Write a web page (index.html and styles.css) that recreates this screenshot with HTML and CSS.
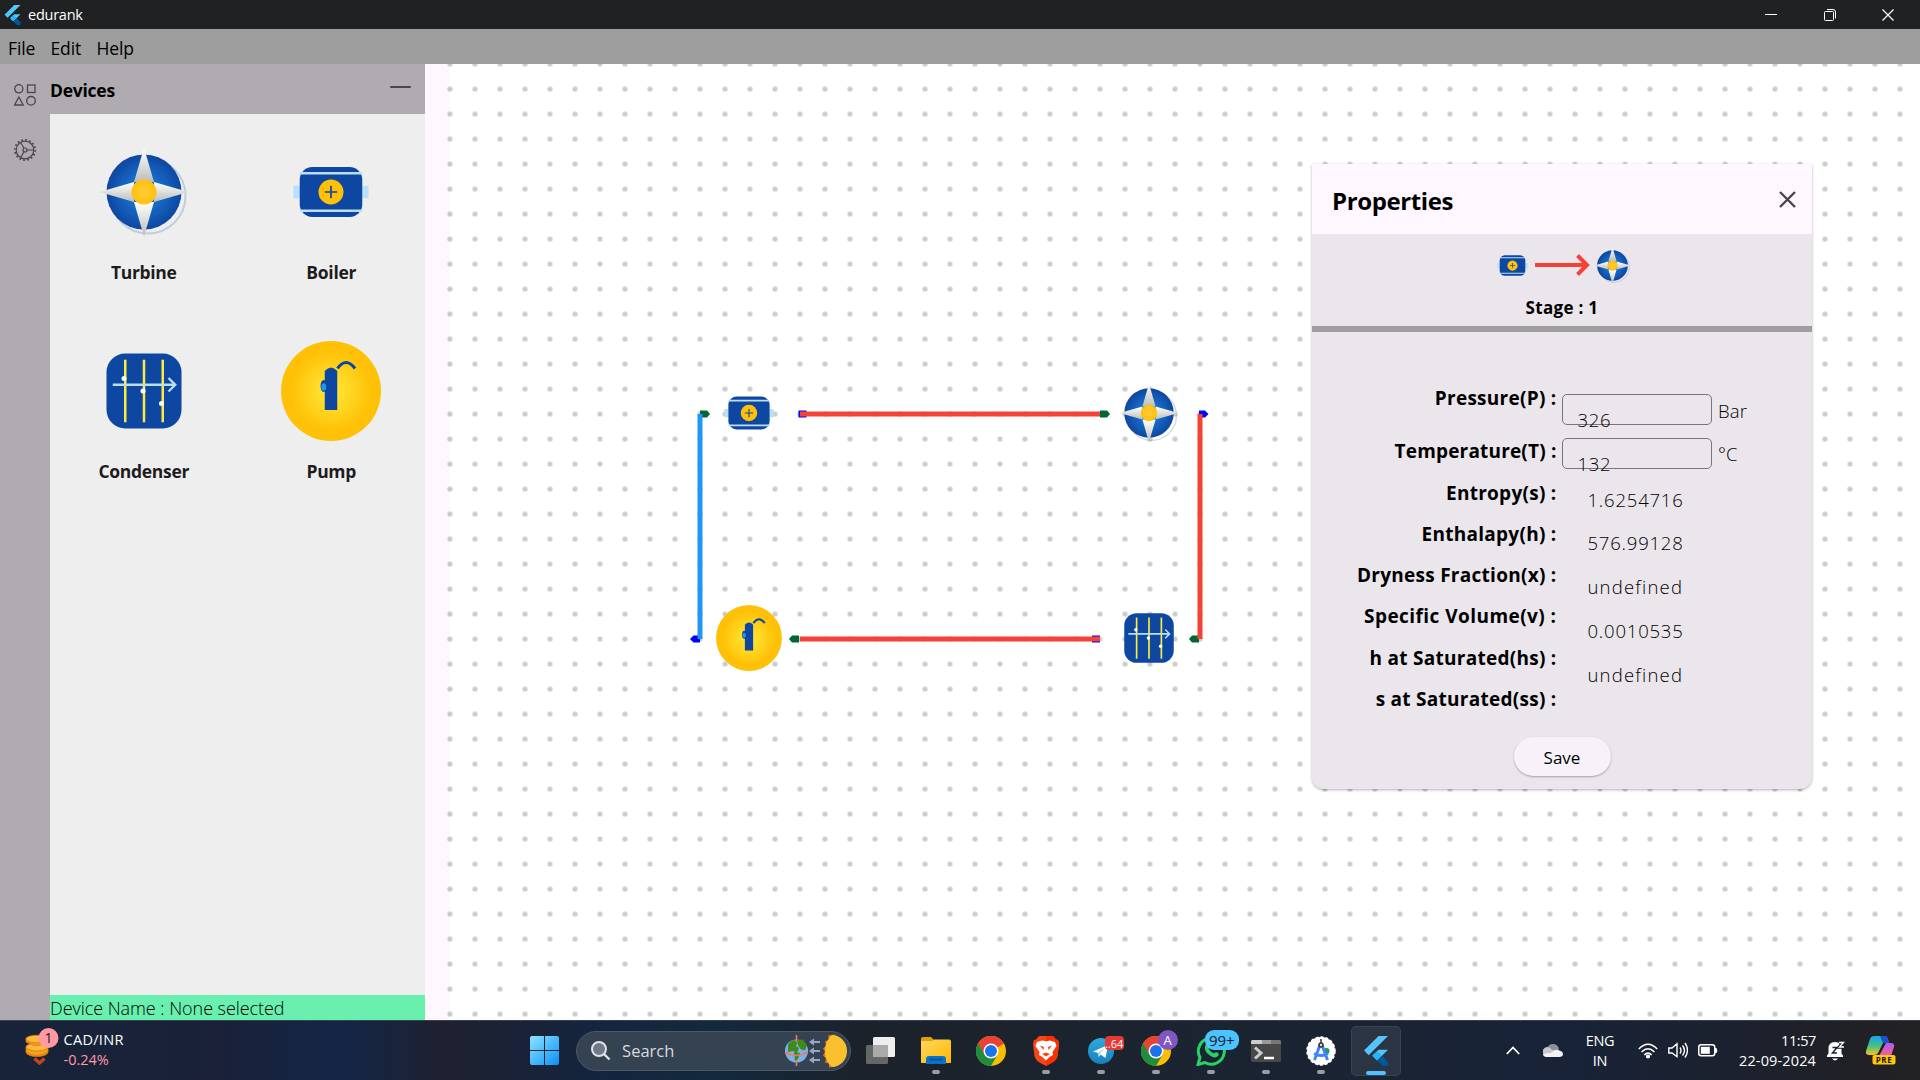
FILE: index.html
```
<!DOCTYPE html>
<html lang="en">
<head>
<meta charset="utf-8">
<title>edurank</title>
<link rel="stylesheet" href="styles.css">
</head>
<body>
<svg class="defs" aria-hidden="true">
  <defs>
    <radialGradient id="g-blue"><stop offset="0" stop-color="#1e88e5"/><stop offset="1" stop-color="#0d47a1"/></radialGradient>
    <radialGradient id="g-hub"><stop offset="0" stop-color="#ffca40"/><stop offset="1" stop-color="#ffc107"/></radialGradient>
    <radialGradient id="g-pump"><stop offset="0" stop-color="#ffeb3b"/><stop offset=".8" stop-color="#ffc107"/></radialGradient>
    <linearGradient id="g-blade" x2="0" y2="1"><stop offset="0" stop-color="#fff"/><stop offset="1" stop-color="#bdbdbd"/></linearGradient>
    <linearGradient id="g-win" x2="1" y2="1"><stop offset="0" stop-color="#8de4ff"/><stop offset="1" stop-color="#0a91f5"/></linearGradient>
    <linearGradient id="g-folder" x2="1" y2="1"><stop offset="0" stop-color="#ffd75e"/><stop offset="1" stop-color="#ffb901"/></linearGradient>
    <linearGradient id="g-tele" x2="0" y2="1"><stop offset="0" stop-color="#2fa8e0"/><stop offset="1" stop-color="#1681bd"/></linearGradient>
    <linearGradient id="g-cop" x2="0" y2="1"><stop offset="0" stop-color="#1ba4e8"/><stop offset=".5" stop-color="#3fbf8e"/><stop offset="1" stop-color="#f5c518"/></linearGradient>
    <linearGradient id="g-cop2" x2="0" y2="1"><stop offset="0" stop-color="#b45be8"/><stop offset="1" stop-color="#f2609a"/></linearGradient>
    <symbol id="turbine" viewBox="0 0 100 100">
      <circle cx="50" cy="50" r="37.500" fill="url(#g-blue)"/>
      <circle cx="54" cy="54" r="37.500" fill="none" stroke="#0d47a1" stroke-opacity=".2" stroke-width="2"/>
      <path d="M50 5.500L60 40H40z" fill="url(#g-blade)"/>
      <path d="M50 94.500L60 60H40z" fill="url(#g-blade)"/>
      <path d="M5.500 50L40 40V60z" fill="url(#g-blade)"/>
      <path d="M94.500 50L60 40V60z" fill="url(#g-blade)"/>
      <circle cx="50" cy="50" r="12.500" fill="url(#g-hub)"/>
    </symbol>
    <symbol id="boiler" viewBox="0 0 100 100">
      <path d="M12.500 43.750H19V56.250H12.500zM81 43.750h6.500V56.250H81z" fill="#bbdefb"/>
      <rect x="18.750" y="25" width="62.500" height="50" rx="12.500" fill="#0d47a1"/>
      <path d="M18.750 31.250h62.500M18.750 68.750h62.500" stroke="#bbdefb" stroke-width="2.500"/>
      <circle cx="50" cy="50" r="12.500" fill="#ffc107"/>
      <path d="M43.750 50h12.500M50 43.750v12.500" stroke="#0d47a1" stroke-width="1.700"/>
    </symbol>
    <symbol id="condenser" viewBox="0 0 100 100">
      <rect x="12.500" y="12.500" width="75" height="75" rx="18.750" fill="#0d47a1"/>
      <path d="M31.250 18.750v62.500M50 18.750v62.500M68.750 18.750v62.500" stroke="#ffeb3b" stroke-width="2.500"/>
      <path d="M18.750 43.750H81M74.500 37l6.800 6.750-6.800 6.750" fill="none" stroke="#bbdefb" stroke-width="2.300"/>
      <g fill="#fff"><circle cx="30" cy="37.500" r="2.500"/><circle cx="49" cy="50" r="2.500"/><circle cx="67.500" cy="62.500" r="2.500"/></g>
    </symbol>
    <symbol id="pump" viewBox="0 0 100 100">
      <circle cx="50" cy="50" r="50" fill="url(#g-pump)"/>
      <ellipse cx="42.700" cy="45" rx="3.200" ry="6" fill="#0d47a1"/>
      <path d="M43.750 30q6.250-7 12.500 0v39h-12.500z" fill="#0d47a1"/>
      <ellipse cx="42.700" cy="46" rx="2.500" ry="3.800" fill="#2196f3"/>
      <path d="M56.500 27.500q8.500-12 17.500 0" fill="none" stroke="#0d47a1" stroke-width="3"/>
    </symbol>
    <symbol id="flutter" viewBox="0 0 24 30">
      <path d="M14.500 0H24L4.700 19.300 0 14.600z" fill="#54c5f8"/>
      <path d="M14.500 13.700H24L13.200 24.500 8.300 19.700z" fill="#54c5f8"/>
      <path d="M8.300 19.700l4.900-4.800 4.900 4.800-4.900 4.900z" fill="#29b6f6"/>
      <path d="M13.200 24.600l4.900-4.900 5.900 6.300V30h-5.400z" fill="#01579b"/>
    </symbol>
    <symbol id="chrome" viewBox="0 0 30 30">
      <circle cx="15" cy="15" r="15" fill="#fbbc04"/>
      <path d="M15 15L2 7.500A15 15 0 0 0 15 30L21.500 18.700z" fill="#1e8e3e"/>
      <path d="M15 15L8.500 18.700 2 7.500A15 15 0 0 1 28 7.500z" fill="#ea4335"/>
      <circle cx="15" cy="15" r="7.500" fill="#fff"/><circle cx="15" cy="15" r="6" fill="#1a73e8"/>
    </symbol>
  </defs>
</svg>

<header class="titlebar">
  <svg class="app-icon" width="17" height="20"><use href="#flutter"/></svg>
  <span class="app-name">edurank</span>
  <div class="window-buttons">
    <svg width="12" height="12"><path d="M0 5.500h12" stroke="#fff"/></svg>
    <svg width="12" height="12" fill="none" stroke="#fff"><rect x=".500" y="2.500" width="9" height="9" rx="1"/><path d="M3 .500h6a2.500 2.500 0 0 1 2.500 2.500v6.500"/></svg>
    <svg width="12" height="12"><path d="M.500.500l11 11M11.500.500l-11 11" stroke="#fff" stroke-width="1.200"/></svg>
  </div>
</header>
<nav class="menubar"><span class="m-file">File</span><span class="m-edit">Edit</span><span>Help</span></nav>

<main class="workspace">
  <aside class="rail">
    <svg width="22" height="22" fill="none" stroke="#4a454d" stroke-width="1.300"><circle cx="4.800" cy="4.800" r="4.100"/><rect x="13.500" y="1" width="7.500" height="7.500"/><path d="M4.800 13L9.200 21H.600z"/><circle cx="17" cy="16.800" r="4.300"/></svg>
    <svg width="22" height="22" fill="none" stroke="#4a454d" stroke-width="1.200"><circle cx="11" cy="11" r="8.800"/><circle cx="11" cy="11" r="10.200" stroke-dasharray="1.800 2.200" stroke-width="1.600"/><circle cx="11" cy="11" r="2"/><path d="M13 11h7M10 9.300L6.500 3.300M10 12.700l-3.500 6"/></svg>
  </aside>
  <section class="devices">
    <header class="devices-head"><h2>Devices</h2><i class="collapse"></i></header>
    <div class="device-grid">
      <div class="device"><svg><use href="#turbine"/></svg><span>Turbine</span></div>
      <div class="device"><svg><use href="#boiler"/></svg><span>Boiler</span></div>
      <div class="device"><svg><use href="#condenser"/></svg><span>Condenser</span></div>
      <div class="device"><svg><use href="#pump"/></svg><span>Pump</span></div>
    </div>
    <footer class="device-status">Device Name : None selected</footer>
  </section>
  <section class="canvas">
    <svg class="grid-dots" width="1495" height="956">
      <defs><pattern id="dots" x="12.500" y="-12.500" width="25" height="25" patternUnits="userSpaceOnUse"><circle cx="12.500" cy="12.500" r="2.600" fill="#000" fill-opacity=".2"/></pattern></defs>
      <rect x="12.500" width="1482" height="956" fill="url(#dots)"/>
    </svg>
    <svg class="node n-boiler"><use href="#boiler"/></svg>
    <svg class="node n-turbine"><use href="#turbine"/></svg>
    <svg class="node n-pump"><use href="#pump"/></svg>
    <svg class="node n-condenser"><use href="#condenser"/></svg>
    <svg class="wires" viewBox="425 64 1495 956" width="1495" height="956">
      <path fill="#063" d="M700 410.500h7l3 3.500-3 3.500h-7zM1100 410.500h7l3 3.500-3 3.500h-7zM799 635.500h-7l-3 3.500 3 3.500h7zM1199 635.500h-7l-3 3.500 3 3.500h7z"/>
      <path fill="#00f" d="M798.500 410.500h8v7h-8zM1092 635.500h8v7h-8zM1199 410.500h6l3.500 3.500-3.500 3.500h-6zM700 635.500h-6.500l-3.500 3.500 3.500 3.500h6.500z"/>
      <path d="M800 414h300M1200 414v225M1100 639H800" stroke="#f44336" stroke-width="5" fill="none"/>
      <path d="M700 639V414" stroke="#2196f3" stroke-width="5"/>
    </svg>

    <section class="panel">
      <header class="panel-head">
        <h1>Properties</h1>
        <svg width="17" height="17"><path d="M1 1l15 15M16 1L1 16" stroke="#49454f" stroke-width="2.400"/></svg>
      </header>
      <div class="stage">
        <div class="stage-flow">
          <svg class="mini"><use href="#boiler"/></svg>
          <svg width="55" height="22" fill="none" stroke="#f44336" stroke-width="4"><path d="M0 11h52M42.500 1.500L52 11l-9.500 9.500"/></svg>
          <svg class="mini"><use href="#turbine"/></svg>
        </div>
        <strong>Stage : 1</strong>
      </div>
      <div class="props">
        <div class="labels">
          <b class="l-pressure">Pressure(P) :</b><b class="l-temp">Temperature(T) :</b><b>Entropy(s) :</b><b>Enthalapy(h) :</b><b>Dryness Fraction(x) :</b><b class="l-volume">Specific Volume(v) :</b><b>h at Saturated(hs) :</b><b>s at Saturated(ss) :</b>
        </div>
        <div class="values">
          <div class="field"><div class="box">326</div><em>Bar</em></div>
          <div class="field"><div class="box">132</div><em class="deg">°C</em></div>
          <div class="results"><span>1.6254716</span><span>576.99128</span><span class="word">undefined</span><span>0.0010535</span><span class="word">undefined</span></div>
        </div>
      </div>
      <button class="save">Save</button>
    </section>
  </section>
</main>

<footer class="taskbar">
  <div class="ticker">
    <svg width="34" height="38"><g fill="#f7a01d" stroke="#d97706" stroke-width=".800"><ellipse cx="12" cy="24" rx="11" ry="4.500"/><path d="M1 19v5q11 7 22 0v-5z"/><ellipse cx="12" cy="19" rx="11" ry="4" fill="#ffb93c"/><path d="M1 10v4q11 7 22 0v-4z"/><ellipse cx="12" cy="11" rx="11" ry="3.800" fill="#ffb93c"/></g><path d="M9.500 30.500l5 4.500 5-4.500" fill="none" stroke="#c8431a" stroke-width="3.500"/><circle cx="23.500" cy="10" r="10" fill="#ff99a4"/><text x="23.500" y="15" text-anchor="middle" font-size="14" fill="#1a1a1a">1</text></svg>
    <div class="ticker-text"><span class="pair">CAD/INR</span><span class="down">-0.24%</span></div>
  </div>
  <div class="apps">
    <div class="app"><svg width="30" height="30"><path d="M0 2q0-2 2-2h12v14H0zM15 0h12q2 0 2 2v12H15zM0 15h14v14H2q-2 0-2-2zM15 15h14v12q0 2-2 2H15z" fill="url(#g-win)"/></svg></div>
    <div class="search">
      <svg width="20" height="20" fill="none" stroke="#dfe3e8" stroke-width="2"><circle cx="8" cy="8" r="7" fill="#6f7a86"/><path d="M13 13l5.500 5.500" stroke-width="2.400"/></svg>
      <span>Search</span>
      <svg class="equinox" width="64" height="36"><circle cx="12.500" cy="18" r="11.500" fill="#7eb2e6"/><path d="M4 11l5-4 5 1-2 5 3 2-2 5-4-2-5 1zM13 7l6-.500 4 6-2 5-4-1-3-4zM10 19l6 1-2 6-3 2z" fill="#3f8a1c"/><path d="M1 19q11 7 23 0M12.500 2v7M12.500 27v6" stroke="#f0776a" stroke-width="1.600" fill="none"/><path d="M26 9h10M26 18h10M26 27h10" stroke="#93a8c4" stroke-width="2"/><path d="M30 5.500v7L25 9zM30 14.500v7L25 18zM30 23.500v7L25 27z" fill="#93a8c4"/><path d="M51 1.500l-7 1 1 4-4 2 1 4-3 3 2 3-2 4 3 3-1 4 4 1 0 4 6-1z" fill="#e87817"/><path d="M48 2a15 16 0 0 1 0 32q-7-6-7-16t7-16z" fill="#fbc02d"/></svg>
    </div>
    <div class="app"><svg width="30" height="30"><rect y="9" width="22" height="19" rx="1.500" fill="#666"/><rect x="7" y="1" width="22" height="20" rx="1.500" fill="#eee"/><path d="M7 9h15v12H7z" fill="#aaa"/></svg></div>
    <div class="app"><svg width="30" height="28"><path d="M0 2q0-2 2-2h8l4 4H0z" fill="#e0a008"/><path d="M0 4h11l2-1.500h15q2 0 2 2V26H0z" fill="url(#g-folder)"/><path d="M5 27v-5q0-3 3-3h14q3 0 3 3v5z" fill="#0a72c8"/><path d="M8.500 22.500h13" stroke="#064f93" stroke-width="1.500"/></svg><i class="run"></i></div>
    <div class="app"><svg width="30" height="30"><use href="#chrome"/></svg></div>
    <div class="app"><svg width="26" height="30"><path d="M6 0h14l3 3.500 2 .500 1 4-1.500 12q-1 4-5 6.500L13 30l-6.500-3.500q-4-2.500-5-6.500L0 8l1-4 2-.500z" fill="#fb4318"/><path d="M13 0h7l3 3.500 2 .500 1 4-1.500 12q-1 4-5 6.500L13 30z" fill="#fa3000"/><path d="M4 6l5-1.500 4 .800 4-.800L22 6l1.500 4-4 6 .500 3-3.500 2-3.500 3.500L9.500 21 6 19l.500-3-4-6z" fill="#fff"/><path d="M7 9.500l4 1.500-.500 3zM19 9.500L15 11l.500 3zM9 18l4-1.500L17 18l-4 2.500z" fill="#fb4318"/></svg><i class="run"></i></div>
    <div class="app"><svg width="26" height="26"><circle cx="13" cy="13" r="13" fill="url(#g-tele)"/><path d="M5 13.500L20 7l-2.500 13-5-3.500-2 2.500-.500-4z" fill="#fff"/><path d="M10 15l7-5-5.500 6-1 3z" fill="#9cc9e3"/></svg><i class="run"></i><span class="tag tag-red">..64</span></div>
    <div class="app"><svg width="30" height="30"><use href="#chrome"/></svg><i class="run"></i><span class="tag tag-user">A</span></div>
    <div class="app"><svg width="30" height="30"><path d="M2 28.500l2-7A13 13 0 1 1 9 26.500z" fill="none" stroke="#25d366" stroke-width="3"/><path d="M9.500 9q2-2 3.500 2-.500 2 0 2.500 2 3 5 4 2-2 3-1 3 1 1 3.500-3 3-8-.500T9 13q-.500-2 .500-4z" fill="#25d366"/></svg><i class="run"></i><span class="tag tag-blue">99+</span></div>
    <div class="app"><svg width="30" height="22"><rect width="30" height="22" rx="1.500" fill="#484848"/><path d="M0 4V1.500Q0 0 1.500 0H11v4z" fill="#ccc"/><path d="M11 0h9v4h-9z" fill="#999"/><path d="M20 0h8.500Q30 0 30 1.500V4H20z" fill="#777"/><path d="M4 7.500l6 5.500-6 5.500" fill="none" stroke="#ccc" stroke-width="3"/><path d="M13 18h10" stroke="#fff" stroke-width="2.500"/></svg><i class="run"></i></div>
    <div class="app"><svg width="30" height="30"><circle cx="15" cy="15" r="14" fill="#fff" stroke="#fff" stroke-width="1.500" stroke-dasharray="3 2"/><circle cx="20.500" cy="15" r="3" fill="#1e9e4a"/><path d="M14 9L8.500 24M16 9l5.500 15M8 17.500q7 4 14 0" stroke="#4285f4" stroke-width="3" fill="none"/><circle cx="15" cy="9" r="2" fill="#ddd" stroke="#333" stroke-width="1.500"/><path d="M15 3v4" stroke="#333" stroke-width="1.500"/></svg><i class="run"></i></div>
    <div class="app active"><svg width="24" height="30"><use href="#flutter"/></svg><i class="run"></i></div>
  </div>
  <div class="tray">
    <svg class="chev" width="14" height="9"><path d="M.800 8L7 1.500 13.200 8" fill="none" stroke="#fff" stroke-width="1.800"/></svg>
    <svg class="cloud" width="20" height="14"><path d="M4 7a6 6 0 0 1 12-2l-3 4z" fill="#8b9097"/><path d="M0 9a4.500 4.500 0 0 1 7-5l6 5-4 4H4q-3-.500-4-4z" fill="#c5c9cd"/><path d="M4 13q-4 0-4-3 4-1 8-1 3-4 7-3 5 1 5 4t-4 3z" fill="#f2f2f2"/></svg>
    <div class="lang"><span>ENG</span><span>IN</span></div>
    <div class="sys">
      <svg width="20" height="16" fill="none" stroke="#fff" stroke-width="1.600"><path d="M.800 6q9.200-9.500 18.400 0M3.600 9q6.400-6.500 12.800 0M6.300 12q3.700-3.800 7.400 0"/><circle cx="10" cy="13.500" r="1.300" fill="#fff"/></svg>
      <svg width="20" height="17" fill="none" stroke="#fff" stroke-width="1.400"><path d="M.800 6H4L9 1.700v13L4 11H.800zM12 5.500q2 3 0 6M14.500 3.500q4 5 0 10M17 1q5 7 0 14.500"/></svg>
      <svg width="20" height="13"><rect x=".750" y=".750" width="16" height="11" rx="2.500" fill="none" stroke="#fff" stroke-width="1.500"/><rect x="2.800" y="2.800" width="9" height="7" fill="#fff"/><path d="M17 4h1.500q1.500 2.500 0 5H17z" fill="#fff"/></svg>
    </div>
    <div class="clock"><span class="time">11:57</span><span class="date">22-09-2024</span></div>
    <svg class="bell" width="18" height="20"><path d="M0 16v-1.500l1.500-2V7.500Q1.500 1 8 1q6.500 0 6.500 6.500v5l1.500 2V16zM5 17.500h6q-3 4-6 0z" fill="#fff"/><path d="M12 1.500h4.500L12.500 6H17" fill="none" stroke="#1b2230" stroke-width="3.400"/><path d="M5.500 6.500h4.500l-4.500 5.500H10" fill="none" stroke="#1b2230" stroke-width="1.500"/><path d="M12 1.500h4.500L12.500 6H17" fill="none" stroke="#fff" stroke-width="1.300"/></svg>
    <svg class="copilot" width="30" height="29"><path d="M8 0h11q2 0 3 3l1 4h-6l-5 10q-1 2-4 2H3q-4 0-3-4L4 3q1-3 4-3z" fill="url(#g-cop)"/><path d="M14 0h5q2 0 3 3l1 4h-6z" fill="#1b4fd6"/><path d="M20 7h5q4 0 3 4l-3 9H13z" fill="url(#g-cop2)"/><rect x="6.500" y="19" width="23" height="9.500" rx="2" fill="#ffc708"/><text x="18" y="26.600" text-anchor="middle" font-size="8" font-weight="700" fill="#1a1a1a" letter-spacing=".6">PRE</text></svg>
  </div>
</footer>
</body>
</html>
```
FILE: styles.css
```
* { box-sizing: border-box; }
body { margin: 0; width: 1920px; height: 1080px; overflow: hidden; display: flex; flex-direction: column; font-family: "Open Sans", "Noto Sans", sans-serif; color: #000; background: #fff; }
svg { display: block; flex: none; }
h1, h2 { margin: 0; }
.defs { position: absolute; width: 0; height: 0; }

.titlebar { height: 29px; background: #1f2122; color: #fff; display: flex; align-items: center; padding-left: 4px; font-size: 14.500px; letter-spacing: -.25px; }
.app-name { margin-left: 7px; padding-bottom: 1px; }
.window-buttons { margin-left: auto; margin-right: 26px; display: flex; gap: 46.500px; }

.menubar { height: 35px; background: #9e9e9e; display: flex; align-items: center; padding: 2px 0 0 8px; font-size: 17.500px; font-weight: 500; letter-spacing: -.1px; }
.m-file { width: 42.500px; }
.m-edit { width: 46px; }

.workspace { height: 956px; display: flex; }
.rail { width: 50px; background: #b0abb0; display: flex; flex-direction: column; align-items: center; padding-top: 20px; gap: 33px; }
.devices { width: 375px; display: flex; flex-direction: column; background: #eee; }
.devices-head { height: 50px; background: #b0abb0; display: flex; align-items: center; justify-content: space-between; padding: 2px 14px 0 0; }
.devices-head h2 { font-size: 17.500px; font-weight: 700; letter-spacing: -.25px; }
.collapse { width: 21px; height: 2px; border-radius: 1px; background: #49454f; margin-top: -6px; }
.device-grid { flex: 1; display: grid; grid-template-columns: 1fr 1fr; grid-auto-rows: 199px; padding-top: 27.500px; }
.device { display: flex; flex-direction: column; align-items: center; font-size: 17.500px; font-weight: 700; letter-spacing: -.3px; color: #1d1b20; }
.device svg { width: 100px; height: 100px; }
.device span { margin-top: 18px; line-height: 24px; }
.device-status { height: 25px; background: #69f0ae; font-size: 18px; font-weight: 300; letter-spacing: -.06px; line-height: 27px; color: #000; white-space: nowrap; }

.canvas { flex: 1; position: relative; background: linear-gradient(90deg, #fef7ff 25px, #fff 25px); overflow: hidden; }
.grid-dots, .wires { position: absolute; left: 0; top: 0; }
.node { position: absolute; width: 66px; height: 66px; }
.n-boiler { left: 290.800px; top: 315.800px; }
.n-turbine { left: 690.800px; top: 315.800px; }
.n-pump { left: 290.800px; top: 540.800px; }
.n-condenser { left: 690.800px; top: 540.800px; }

.panel { position: absolute; left: 887px; top: 100px; width: 500px; height: 625px; background: #ebe6eb; border-radius: 0 0 12px 12px; box-shadow: 0 1px 3px rgba(0,0,0,.3); display: flex; flex-direction: column; align-items: center; }
.panel-head { align-self: stretch; height: 70px; background: #fef7ff; padding: 0 16px 0 20px; display: flex; align-items: center; justify-content: space-between; }
.panel-head h1 { font-size: 24px; font-weight: 700; letter-spacing: -.4px; padding-top: 2px; }
.stage { align-self: stretch; height: 97.500px; border-bottom: 6.500px solid #9e9e9e; display: flex; flex-direction: column; align-items: center; padding-top: 10.500px; }
.stage-flow { display: flex; align-items: center; gap: 2px; }
.mini { width: 41px; height: 41px; }
.stage strong { font-size: 17px; letter-spacing: .3px; line-height: 24px; margin-top: 10px; }
.props { align-self: stretch; flex: 1; display: flex; }
.labels { width: 244.500px; padding-top: 53px; display: flex; flex-direction: column; align-items: flex-end; font-size: 19px; letter-spacing: .27px; white-space: nowrap; }
.labels b { height: 41.300px; line-height: 26px; font-weight: 700; flex: none; }
.labels .l-pressure { height: 53px; }
.labels .l-temp { height: 42px; letter-spacing: .18px; }
.labels .l-volume { letter-spacing: .45px; }
.values { padding: 62px 0 0 5.500px; display: flex; flex-direction: column; font-size: 18.500px; font-weight: 300; color: #000; }
.field { display: flex; height: 44px; align-items: flex-start; }
.field em { font-style: normal; line-height: 26px; margin: 4px 0 0 6px; letter-spacing: .2px; }
.field em.deg { margin-top: 3px; }
.box { width: 150px; height: 31px; border: 1.500px solid #79747e; border-radius: 5px; padding: 12px 0 0 14.500px; line-height: 26px; letter-spacing: .75px; }
.results { padding: 5px 0 0 25.500px; display: flex; flex-direction: column; letter-spacing: .8px; }
.results span { height: 43.900px; line-height: 26px; flex: none; }
.results .word { letter-spacing: 1.200px; }
.save { margin: 0 0 13px; width: 97px; height: 39px; border: 0; border-radius: 20px; background: #f7f2fa; box-shadow: 0 1px 2px rgba(0,0,0,.3); font: 500 17px "Open Sans", sans-serif; color: #000; padding: 2px 0 0; flex: none; }

.taskbar { height: 60px; border-top: 1px solid #38424e; background: linear-gradient(90deg, #17243a 0, #1a2139 220px, #132646 340px, #1f2130 445px, #14253f 600px, #13293c 720px, #1c222b 860px, #1b2430 1200px, #182338 1560px, #1c212d 1750px, #222124 1900px); display: flex; color: #fff; font-size: 14.500px; }
.ticker { width: 517px; padding-left: 25px; display: flex; gap: 4.500px; padding-top: 7px; flex: none; }
.ticker-text { display: flex; flex-direction: column; line-height: 20px; padding-top: 2px; }
.pair { letter-spacing: .3px; }
.down { color: #ff99a4; }
.apps { display: flex; align-items: center; flex: none; }
.app { width: 55.100px; height: 50px; display: flex; align-items: center; justify-content: center; position: relative; }
.run { position: absolute; left: 23.500px; bottom: 2px; width: 8px; height: 4px; border-radius: 2px; background: #9a9da3; }
.active { width: 50px; margin-left: 2.500px; background: rgba(255,255,255,.08); border-radius: 5px; box-shadow: inset 0 0 0 1px rgba(255,255,255,.07); }
.active .run { left: 15px; width: 20px; bottom: 1px; background: #4cc2ff; }
.search { width: 275px; height: 40px; margin: 0 2px 0 4px; border-radius: 20px; background: #354252; border: 1px solid #4b5866; display: flex; align-items: center; padding-left: 14px; font-size: 16.500px; color: #d6dade; }
.search span { margin-left: 11px; flex: 1; }
.equinox { margin-right: 2px; }
.tag { position: absolute; display: grid; place-items: center; }
.tag-red { right: 5px; top: 10px; width: 19px; height: 14px; border-radius: 4px; background: #e53935; font-size: 11px; }
.tag-user { right: 6px; top: 4px; width: 20px; height: 20px; border-radius: 50%; background: #7e57c2; font-size: 13px; }
.tag-blue { right: 0; top: 4px; width: 34px; height: 20px; border-radius: 9px; background: #4cc2ff; color: #10202c; font-size: 15px; }
.tray { margin-left: auto; width: 427px; display: flex; align-items: center; flex: none; }
.chev { margin: 0 13px; }
.cloud { margin: 0 10px; }
.lang { width: 54px; display: flex; flex-direction: column; line-height: 20px; align-items: center; letter-spacing: -.3px; }
.sys { display: flex; gap: 10px; padding-left: 11px; align-items: center; }
.clock { width: 98px; display: flex; flex-direction: column; align-items: flex-end; line-height: 20px; }
.time { letter-spacing: -.4px; }
.date { letter-spacing: .13px; }
.bell { margin-left: 11px; }
.copilot { margin-left: 21px; }
```
